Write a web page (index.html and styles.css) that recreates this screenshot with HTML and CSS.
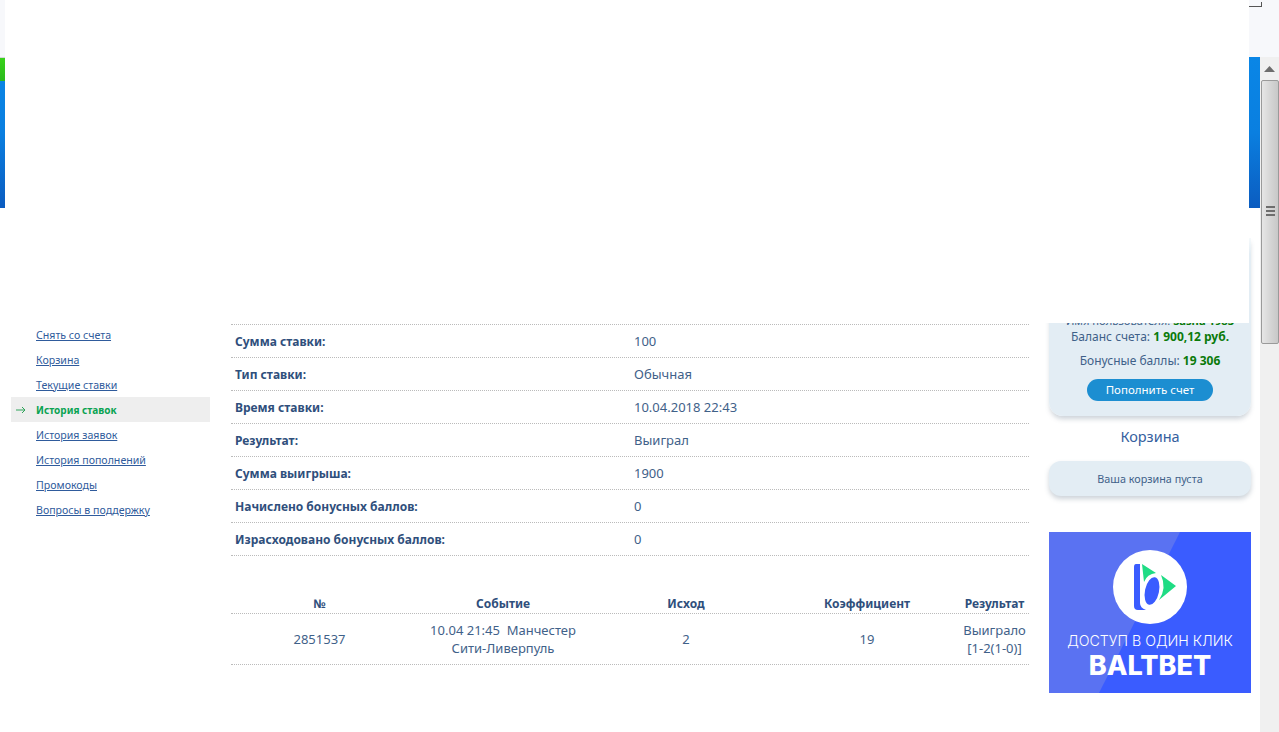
FILE: index.html
```html
<!DOCTYPE html>
<html lang="ru">
<head>
<meta charset="utf-8">
<title>История ставок</title>
<link rel="stylesheet" href="styles.css">
</head>
<body>
<div class="page">
  <div class="topstrip"></div>
  <div class="below">
    <div class="viewport">
      <div class="hero"></div>
      <div class="columns">
        <nav class="side">
          <a class="side-link" href="#">Снять со счета</a>
          <a class="side-link" href="#">Корзина</a>
          <a class="side-link" href="#">Текущие ставки</a>
          <a class="side-link active" href="#"><svg class="arrow" width="10" height="8" viewBox="0 0 10 8"><path d="M0 4H9M6 1l3 3-3 3" fill="none" stroke="#2fa35a" stroke-width="1"/></svg>История ставок</a>
          <a class="side-link" href="#">История заявок</a>
          <a class="side-link" href="#">История пополнений</a>
          <a class="side-link" href="#">Промокоды</a>
          <a class="side-link" href="#">Вопросы в поддержку</a>
        </nav>
        <main class="content">
          <div class="info">
            <div class="info-row"><b>Сумма ставки:</b><span>100</span></div>
            <div class="info-row"><b>Тип ставки:</b><span>Обычная</span></div>
            <div class="info-row"><b>Время ставки:</b><span>10.04.2018 22:43</span></div>
            <div class="info-row"><b>Результат:</b><span>Выиграл</span></div>
            <div class="info-row"><b>Сумма выигрыша:</b><span>1900</span></div>
            <div class="info-row"><b>Начислено бонусных баллов:</b><span>0</span></div>
            <div class="info-row"><b>Израсходовано бонусных баллов:</b><span>0</span></div>
          </div>
          <div class="bets">
            <div class="bets-row bets-head">
              <b>№</b><b>Событие</b><b>Исход</b><b>Коэффициент</b><b>Результат</b>
            </div>
            <div class="bets-row bets-body">
              <span>2851537</span>
              <span>10.04 21:45&nbsp; Манчестер<br>Сити-Ливерпуль</span>
              <span>2</span>
              <span>19</span>
              <span>Выиграло<br>[1-2(1-0)]</span>
            </div>
          </div>
        </main>
        <aside class="right">
          <div class="account">
            <p class="clipped">Имя пользователя: <strong>Sasha 1983</strong></p>
            <p>Баланс счета: <strong>1 900,12 руб.</strong></p>
            <p>Бонусные баллы: <strong>19 306</strong></p>
            <a class="topup" href="#">Пополнить счет</a>
          </div>
          <h2 class="cart-title">Корзина</h2>
          <div class="cart">Ваша корзина пуста</div>
          <div class="banner">
            <svg class="banner-art" width="202" height="161" viewBox="0 0 202 161">
              <rect width="202" height="161" fill="#3a5cff"/>
              <path d="M0 0H131L50 161H0Z" fill="#5a72f2"/>
              <circle cx="101" cy="55" r="37" fill="#fff"/>
              <path d="M91 32H87Q85 32 85 35V74Q85 78 89 78H97Q91 76 91 71Z" fill="#3a5cff"/>
              <path d="M93 32L107 41Q98 42 95 50Z" fill="#1fdc84"/>
              <path d="M112 43L127 54L110 68Q118 56 112 43Z" fill="#1fdc84"/>
              <ellipse cx="103" cy="59" rx="7" ry="14" transform="rotate(12 103 59)" fill="#3a5cff"/>
            </svg>
            <div class="banner-line">ДОСТУП В ОДИН КЛИК</div>
            <div class="banner-brand">BALTBET</div>
          </div>
        </aside>
      </div>
    </div>
    <div class="scrollbar">
      <div class="sb-up"><svg width="11" height="6" viewBox="0 0 11 6"><path d="M5.5 0L11 6H0Z" fill="#6d6d6d"/></svg></div>
      <div class="sb-thumb"><span></span><span></span><span></span></div>
    </div>
  </div>
  <div class="overlay"></div>
  <div class="corner"></div>
</div>
</body>
</html>
```

FILE: styles.css
```css
* { box-sizing: border-box; }
html, body { margin: 0; padding: 0; overflow: hidden; }
body { font-family: "Noto Sans", "Open Sans", sans-serif; color: #3f6189; background: #fff; }
.page { position: relative; width: 1279px; height: 732px; overflow: hidden; display: flex; flex-direction: column; }
.topstrip { height: 57px; background: #f7f8fb; flex: none; }
.below { display: flex; flex: 1; min-height: 0; }
.viewport { flex: 1; min-width: 0; overflow: hidden; }
.hero {
  height: 151px;
  background:
    linear-gradient(#d6d8da 0, #d6d8da 1px, #38d21a 1px, #2ab91c 24px) left top / 1000px 24px no-repeat,
    linear-gradient(#0a86e6 0, #0a7fe0 50%, #0b5cc0 100%);
}
.columns { display: flex; align-items: flex-start; }

.side { width: 199px; margin: 114px 0 0 11px; flex: none; display: flex; flex-direction: column; }
.side-link { display: flex; align-items: center; height: 25px; padding-left: 25px; font-size: 10.6px; color: #2f5b9c; text-decoration: underline; position: relative; }
.side-link.active { background: #eeeeee; color: #0aa352; font-size: 10px; font-weight: 700; text-decoration: none; }
.arrow { position: absolute; left: 5px; top: 9px; }

.content { width: 798px; margin: 116px 0 0 21px; flex: none; }
.info-row { display: flex; align-items: center; height: 33px; border-bottom: 1px dotted #bbb; font-size: 13px; padding-left: 4px; }
.info-row:first-child { height: 34px; border-top: 1px dotted #bbb; }
.info-row b { width: 399px; flex: none; color: #2f4f7c; font-size: 12px; }
.bets { margin-top: 37px; }
.bets-row { display: grid; grid-template-columns: 177px 190px 176px 186px 69px; text-align: center; font-size: 13px; border-bottom: 1px dotted #bbb; align-items: center; }
.bets-head { height: 21px; color: #2f4f7c; font-size: 12px; }
.bets-body { height: 51px; line-height: 18px; }

.right { width: 202px; margin: 0 0 0 20px; flex: none; text-align: center; }
.account { height: 178px; margin-top: 30px; padding-top: 71px; background: linear-gradient(#f6fafc 0, #e3edf4 16px); border-radius: 0 0 14px 14px; box-shadow: 0 4px 5px -1px rgba(90, 110, 130, .3); font-size: 12px; }
.account p { margin: 0; height: 24px; line-height: 24px; white-space: nowrap; }
.account strong { color: #0a7a0a; }
.account .clipped { height: 16px; font-size: 11.2px; }
.topup { display: block; width: 126px; height: 22px; line-height: 22px; margin: 6px auto 0; background: #1c8ed1; color: #fff; border-radius: 11px; font-size: 11.5px; text-decoration: none; }
.cart-title { margin: 10px 0 0; height: 20px; line-height: 20px; font-size: 14.5px; font-weight: 400; color: #35609e; }
.cart { margin-top: 15px; height: 35px; line-height: 35px; background: #e3edf4; border-radius: 12px; box-shadow: 0 3px 5px rgba(90, 110, 130, .3); font-size: 10.8px; }
.banner { position: relative; margin-top: 36px; width: 202px; height: 161px; display: flex; flex-direction: column; align-items: center; color: #fff; padding-top: 98px; }
.banner-art { position: absolute; left: 0; top: 0; }
.banner-line { position: relative; font-size: 14.2px; line-height: 22px; font-family: "Inter", "Noto Sans", sans-serif; font-weight: 300; white-space: nowrap; }
.banner-brand { position: relative; font-size: 27px; line-height: 28px; font-family: "Inter", "Noto Sans", sans-serif; font-weight: 800; }

.scrollbar { width: 19px; flex: none; background: #f0f0f0; }
.sb-up { height: 23px; display: flex; align-items: center; justify-content: center; }
.sb-thumb { height: 264px; margin: 0 0 0 1px; background: linear-gradient(90deg, #e6e6e6, #d6d6d6 50%, #c8c8c8); border: 1px solid #9a9a9a; border-radius: 2px; display: flex; flex-direction: column; align-items: center; gap: 2px; padding-top: 125px; }
.sb-thumb span { width: 9px; height: 2px; background: #6e6e6e; }

.overlay { position: absolute; left: 5px; top: 0; width: 1244px; height: 323px; background: #fff; }
.corner { position: absolute; left: 1249px; top: 2px; width: 13px; height: 5px; border: 1px solid #555; border-width: 0 1px 1px 0; }
```
